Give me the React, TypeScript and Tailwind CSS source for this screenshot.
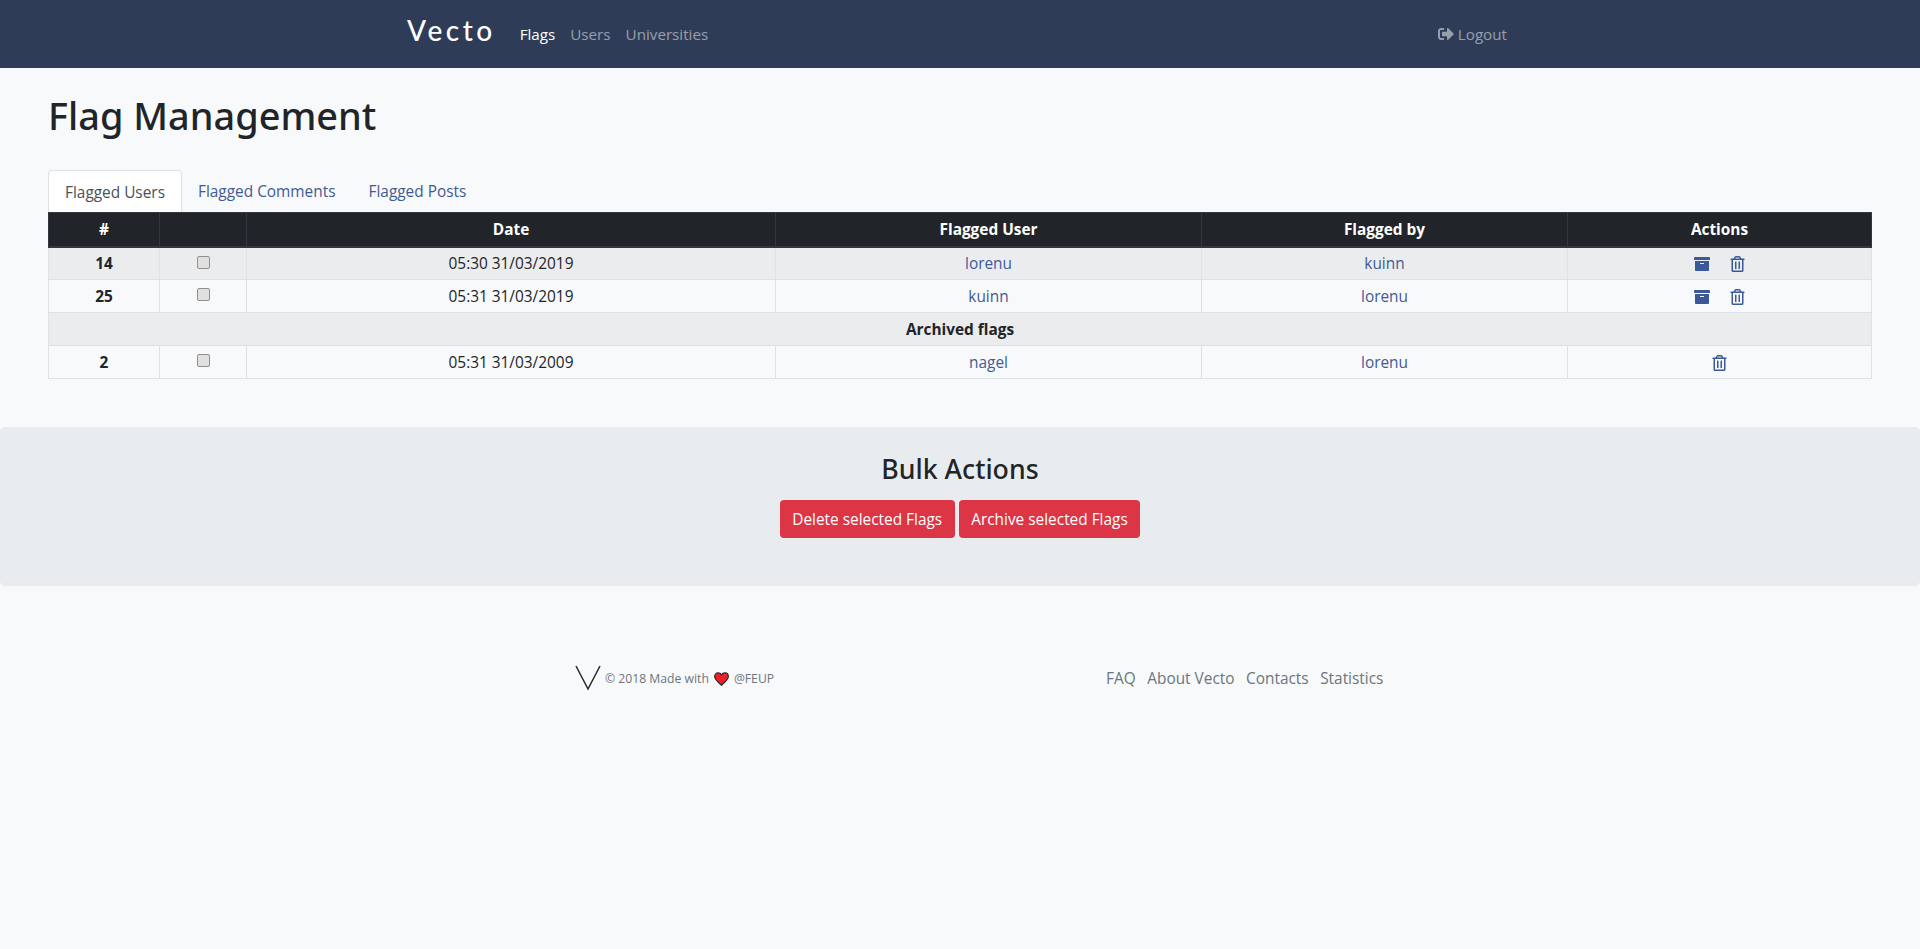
import { FaArchive, FaRegTrashAlt, FaSignOutAlt } from 'react-icons/fa';

const font = { fontFamily: '"Open Sans", "Noto Sans", sans-serif' };
const headingFont = { fontFamily: '"Noto Sans", "Open Sans", sans-serif' };

type Row = { id: number; date: string; user: string; by: string; archived?: boolean };

const activeFlags: Row[] = [
  { id: 14, date: '05:30 31/03/2019', user: 'lorenu', by: 'kuinn' },
  { id: 25, date: '05:31 31/03/2019', user: 'kuinn', by: 'lorenu' },
];

const archivedFlags: Row[] = [{ id: 2, date: '05:31 31/03/2009', user: 'nagel', by: 'lorenu', archived: true }];

function FlagRow({ row, striped }: { row: Row; striped: boolean }) {
  const cell = 'border border-[#dee2e6] p-0 pt-px h-[33px] text-center align-middle';
  return (
    <tr className={striped ? 'bg-[#ebecee]' : ''}>
      <td className={`${cell} font-bold text-[#212529]`}>{row.id}</td>
      <td className={cell}>
        <input
          type="checkbox"
          className="appearance-none inline-block align-middle w-[13px] h-[13px] mb-[6px] rounded-[2px] border border-[#8f8f8f] bg-[#e0e0e0]"
        />
      </td>
      <td className={`${cell} text-[#212529]`}>{row.date}</td>
      <td className={`${cell} text-[#3f5b96]`}>{row.user}</td>
      <td className={`${cell} text-[#3f5b96]`}>{row.by}</td>
      <td className={cell}>
        <div className="flex items-center justify-center gap-5 text-[#3b5998]">
          {!row.archived && <FaArchive className="w-4 h-4" />}
          <FaRegTrashAlt className="w-[15px] h-4" />
        </div>
      </td>
    </tr>
  );
}

export default function App() {
  return (
    <div className="min-h-screen bg-[#f8f9fa] text-[15.4px] text-[#212529]" style={font}>
      {/* Navbar */}
      <nav className="h-[68px] bg-[#2f3c58] flex items-center pl-[407px] pr-[413px] text-[15.2px]">
        <span
          className="text-[28px] leading-none font-medium tracking-[3.5px] text-white mr-[24px] mb-[9px]"
          style={{ fontFamily: 'Lato, sans-serif' }}
        >
          Vecto
        </span>
        <a className="text-white mr-[15px] mt-px">Flags</a>
        <a className="text-white/50 mr-[15px] mt-px">Users</a>
        <a className="text-white/50 mt-px">Universities</a>
        <a className="ml-auto text-white/50 flex items-center gap-1 mt-px">
          <FaSignOutAlt className="w-4 h-4" /> Logout
        </a>
      </nav>

      <div className="px-12">
        <h1 className="text-[37.9px] leading-[48px] font-medium mt-[23px] mb-[31px]" style={headingFont}>
          Flag Management
        </h1>

        {/* Tabs */}
        <div className="flex h-[42px] text-[15.4px]">
          <a className="px-4 pt-[9.5px] border border-[#dee2e6] border-b-0 rounded-t-[4px] bg-white text-[#495057]">Flagged Users</a>
          <a className="px-4 pt-[9.5px] text-[#3f5b96]">Flagged Comments</a>
          <a className="px-4 pt-[9.5px] ml-px text-[#3f5b96]">Flagged Posts</a>
        </div>

        <table className="w-full table-fixed border-collapse">
          <colgroup>
            <col className="w-[111px]" />
            <col className="w-[87px]" />
            <col className="w-[529px]" />
            <col className="w-[426px]" />
            <col className="w-[366px]" />
            <col />
          </colgroup>
          <thead>
            <tr className="bg-[#212529] text-white">
              {['#', '', 'Date', 'Flagged User', 'Flagged by', 'Actions'].map((h, i) => (
                <th key={i} className="border border-[#32383e] border-b-2 h-[34px] p-0 font-bold">
                  {h}
                </th>
              ))}
            </tr>
          </thead>
          <tbody>
            {activeFlags.map((r, i) => (
              <FlagRow key={r.id} row={r} striped={i % 2 === 0} />
            ))}
            <tr className="bg-[#ebecee]">
              <td colSpan={6} className="border border-[#dee2e6] h-[33px] p-0 pt-px text-center font-bold">
                Archived flags
              </td>
            </tr>
            {archivedFlags.map((r) => (
              <FlagRow key={r.id} row={r} striped={false} />
            ))}
          </tbody>
        </table>
      </div>

      {/* Bulk actions */}
      <section className="mt-12 h-[159px] bg-[#e9ecef] rounded-[5px] pt-[25px] flex flex-col items-center">
        <h3 className="text-[26.7px] leading-[34px] font-medium mb-[14px]" style={headingFont}>
          Bulk Actions
        </h3>
        <div className="flex gap-1">
          <button className="h-[38px] px-[12.5px] pt-px rounded-[4px] bg-[#dc3545] text-white">Delete selected Flags</button>
          <button className="h-[38px] px-[12.5px] pt-px rounded-[4px] bg-[#dc3545] text-white">Archive selected Flags</button>
        </div>
      </section>

      {/* Footer */}
      <footer className="mt-[79px] flex items-center pl-[575px]">
        <svg viewBox="0 0 26 26" className="w-[26px] h-[26px]" fill="none" stroke="#212529" strokeWidth="1.5">
          <path d="M1 1 L13 24 L25 1" />
        </svg>
        <span className="ml-[4px] mt-[3px] text-[12.2px] text-[#6c757d] flex items-center">
          © 2018 Made with
          <svg viewBox="0 0 24 22" className="w-[15px] h-[14px] mx-[5px]">
            <path
              d="M12 21 C5 15 1 11.5 1 7 C1 3.5 3.5 1 6.5 1 C8.8 1 10.8 2.2 12 4.2 C13.2 2.2 15.2 1 17.5 1 C20.5 1 23 3.5 23 7 C23 11.5 19 15 12 21 Z"
              fill="#e8202a"
              stroke="#212529"
              strokeWidth="1.8"
            />
          </svg>
          @FEUP
        </span>
        <div className="flex gap-[11.5px] ml-[332px] mt-[2px] text-[#6c757d]">
          <a>FAQ</a>
          <a>About Vecto</a>
          <a>Contacts</a>
          <a>Statistics</a>
        </div>
      </footer>
    </div>
  );
}
